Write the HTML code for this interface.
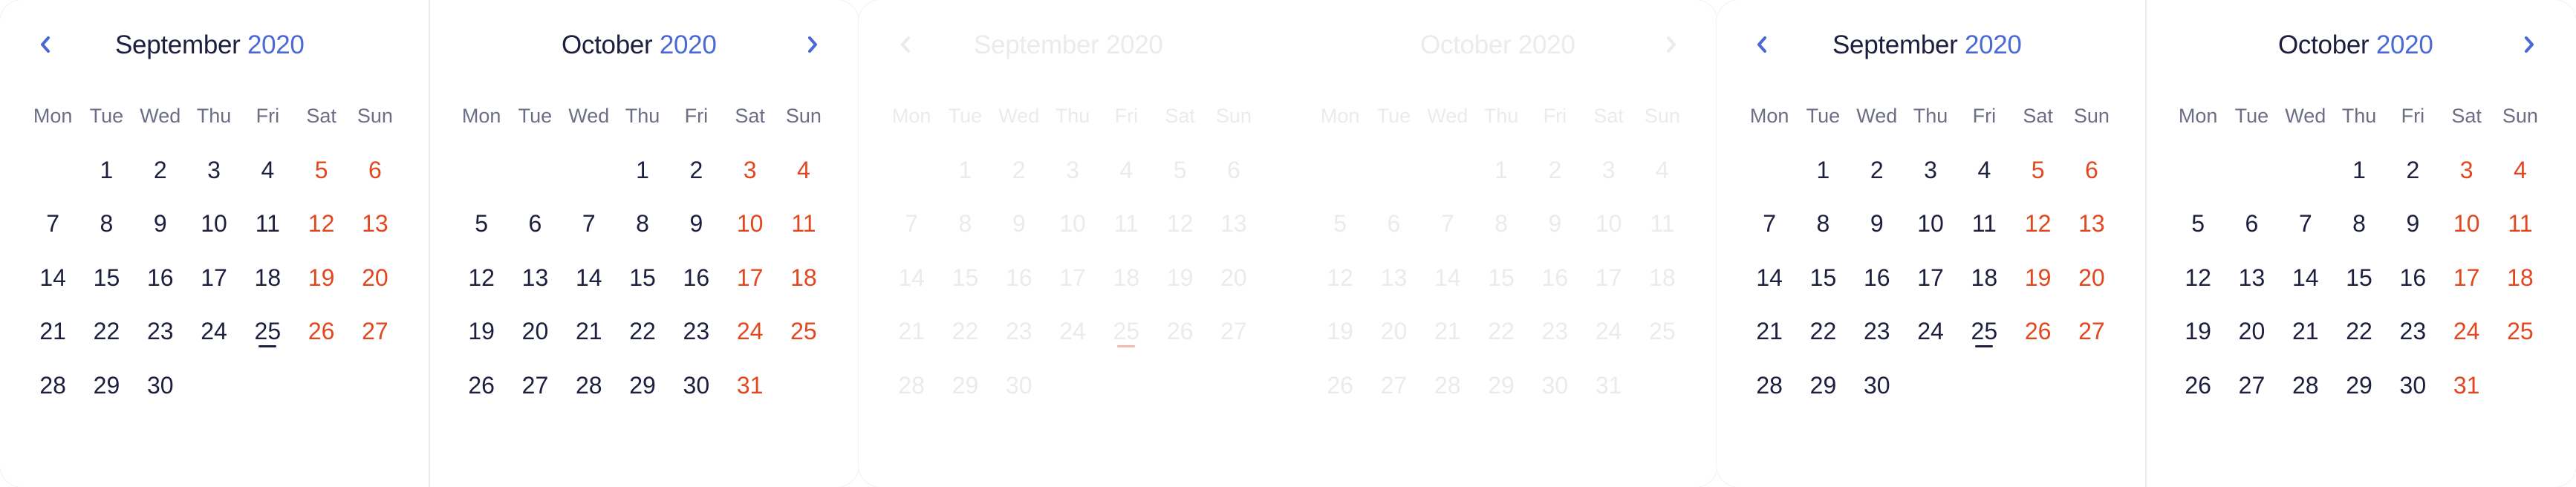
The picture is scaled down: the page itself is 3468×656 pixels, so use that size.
<!DOCTYPE html>
<html><head><meta charset="utf-8"><style>
*{margin:0;padding:0;box-sizing:border-box}
body{width:3468px;height:656px;background:#fff;position:relative;overflow:hidden;font-family:"Liberation Sans",sans-serif}
.card{position:absolute;top:0;width:1156px;height:656px;border-radius:30px;background:#fff;box-shadow:0 0 0 1px #f2f2f5}
.div{position:absolute;left:577px;top:0;width:2px;height:656px;background:#ececf0}
.m{position:absolute;top:0;width:578px;height:656px}
.h{position:absolute;top:41px;height:40px;line-height:40px;font-size:35px;color:#1d1f3f;white-space:nowrap;letter-spacing:-0.3px}
.h b{font-weight:normal;color:#4a69d6}
.g{position:absolute;left:35px;top:120px;display:grid;grid-template-columns:repeat(7,72.3px);grid-auto-rows:72.5px}
.g div{text-align:center;line-height:72.5px;font-size:32px;color:#1d1f3f;position:relative}
.g .d{font-size:27px;color:#6b6e86}
.g .r{color:#e2471f}
.g .u::after{content:"";position:absolute;left:24px;width:24px;top:55px;height:3px;border-radius:2px;background:#1d1f3f}
.ch{position:absolute;top:48px}
.fade .h,.fade .h b,.fade .g div,.fade .g .d,.fade .g .r{color:#ebebef}
.fade .g .u::after{background:#f4b8b0}
</style></head><body>

<!-- CARD 1 -->
<div class="card" style="left:0">
 <div class="div"></div>
 <svg class="ch" style="left:50px" width="22" height="24" viewBox="0 0 22 24"><polyline points="15,3 7,12 15,21" fill="none" stroke="#4a69d6" stroke-width="4" stroke-linecap="round" stroke-linejoin="round"/></svg>
 <svg class="ch" style="left:1083px" width="22" height="24" viewBox="0 0 22 24"><polyline points="7,3 15,12 7,21" fill="none" stroke="#4a69d6" stroke-width="4" stroke-linecap="round" stroke-linejoin="round"/></svg>
 <div class="m" style="left:0">
  <div class="h" style="left:155px">September <b>2020</b></div>
  <div class="g">
   <div class="d">Mon</div><div class="d">Tue</div><div class="d">Wed</div><div class="d">Thu</div><div class="d">Fri</div><div class="d">Sat</div><div class="d">Sun</div>
   <div></div><div>1</div><div>2</div><div>3</div><div>4</div><div class="r">5</div><div class="r">6</div>
   <div>7</div><div>8</div><div>9</div><div>10</div><div>11</div><div class="r">12</div><div class="r">13</div>
   <div>14</div><div>15</div><div>16</div><div>17</div><div>18</div><div class="r">19</div><div class="r">20</div>
   <div>21</div><div>22</div><div>23</div><div>24</div><div class="u">25</div><div class="r">26</div><div class="r">27</div>
   <div>28</div><div>29</div><div>30</div>
  </div>
 </div>
 <div class="m" style="left:577px">
  <div class="h" style="left:179px">October <b>2020</b></div>
  <div class="g">
   <div class="d">Mon</div><div class="d">Tue</div><div class="d">Wed</div><div class="d">Thu</div><div class="d">Fri</div><div class="d">Sat</div><div class="d">Sun</div>
   <div></div><div></div><div></div><div>1</div><div>2</div><div class="r">3</div><div class="r">4</div>
   <div>5</div><div>6</div><div>7</div><div>8</div><div>9</div><div class="r">10</div><div class="r">11</div>
   <div>12</div><div>13</div><div>14</div><div>15</div><div>16</div><div class="r">17</div><div class="r">18</div>
   <div>19</div><div>20</div><div>21</div><div>22</div><div>23</div><div class="r">24</div><div class="r">25</div>
   <div>26</div><div>27</div><div>28</div><div>29</div><div>30</div><div class="r">31</div>
  </div>
 </div>
</div>

<!-- CARD 2 (faded) -->
<div class="card fade" style="left:1156px">
 <svg class="ch" style="left:52px" width="22" height="24" viewBox="0 0 22 24"><polyline points="15,3 7,12 15,21" fill="none" stroke="#ebebef" stroke-width="4" stroke-linecap="round" stroke-linejoin="round"/></svg>
 <svg class="ch" style="left:1083px" width="22" height="24" viewBox="0 0 22 24"><polyline points="7,3 15,12 7,21" fill="none" stroke="#ebebef" stroke-width="4" stroke-linecap="round" stroke-linejoin="round"/></svg>
 <div class="m" style="left:0">
  <div class="h" style="left:155px">September <b>2020</b></div>
  <div class="g">
   <div class="d">Mon</div><div class="d">Tue</div><div class="d">Wed</div><div class="d">Thu</div><div class="d">Fri</div><div class="d">Sat</div><div class="d">Sun</div>
   <div></div><div>1</div><div>2</div><div>3</div><div>4</div><div class="r">5</div><div class="r">6</div>
   <div>7</div><div>8</div><div>9</div><div>10</div><div>11</div><div class="r">12</div><div class="r">13</div>
   <div>14</div><div>15</div><div>16</div><div>17</div><div>18</div><div class="r">19</div><div class="r">20</div>
   <div>21</div><div>22</div><div>23</div><div>24</div><div class="u">25</div><div class="r">26</div><div class="r">27</div>
   <div>28</div><div>29</div><div>30</div>
  </div>
 </div>
 <div class="m" style="left:577px">
  <div class="h" style="left:179px">October <b>2020</b></div>
  <div class="g">
   <div class="d">Mon</div><div class="d">Tue</div><div class="d">Wed</div><div class="d">Thu</div><div class="d">Fri</div><div class="d">Sat</div><div class="d">Sun</div>
   <div></div><div></div><div></div><div>1</div><div>2</div><div class="r">3</div><div class="r">4</div>
   <div>5</div><div>6</div><div>7</div><div>8</div><div>9</div><div class="r">10</div><div class="r">11</div>
   <div>12</div><div>13</div><div>14</div><div>15</div><div>16</div><div class="r">17</div><div class="r">18</div>
   <div>19</div><div>20</div><div>21</div><div>22</div><div>23</div><div class="r">24</div><div class="r">25</div>
   <div>26</div><div>27</div><div>28</div><div>29</div><div>30</div><div class="r">31</div>
  </div>
 </div>
</div>

<!-- CARD 3 -->
<div class="card" style="left:2311px;width:1157px">
 <div class="div"></div>
 <svg class="ch" style="left:50px" width="22" height="24" viewBox="0 0 22 24"><polyline points="15,3 7,12 15,21" fill="none" stroke="#4a69d6" stroke-width="4" stroke-linecap="round" stroke-linejoin="round"/></svg>
 <svg class="ch" style="left:1083px" width="22" height="24" viewBox="0 0 22 24"><polyline points="7,3 15,12 7,21" fill="none" stroke="#4a69d6" stroke-width="4" stroke-linecap="round" stroke-linejoin="round"/></svg>
 <div class="m" style="left:0">
  <div class="h" style="left:156px">September <b>2020</b></div>
  <div class="g">
   <div class="d">Mon</div><div class="d">Tue</div><div class="d">Wed</div><div class="d">Thu</div><div class="d">Fri</div><div class="d">Sat</div><div class="d">Sun</div>
   <div></div><div>1</div><div>2</div><div>3</div><div>4</div><div class="r">5</div><div class="r">6</div>
   <div>7</div><div>8</div><div>9</div><div>10</div><div>11</div><div class="r">12</div><div class="r">13</div>
   <div>14</div><div>15</div><div>16</div><div>17</div><div>18</div><div class="r">19</div><div class="r">20</div>
   <div>21</div><div>22</div><div>23</div><div>24</div><div class="u">25</div><div class="r">26</div><div class="r">27</div>
   <div>28</div><div>29</div><div>30</div>
  </div>
 </div>
 <div class="m" style="left:577px">
  <div class="h" style="left:179px">October <b>2020</b></div>
  <div class="g">
   <div class="d">Mon</div><div class="d">Tue</div><div class="d">Wed</div><div class="d">Thu</div><div class="d">Fri</div><div class="d">Sat</div><div class="d">Sun</div>
   <div></div><div></div><div></div><div>1</div><div>2</div><div class="r">3</div><div class="r">4</div>
   <div>5</div><div>6</div><div>7</div><div>8</div><div>9</div><div class="r">10</div><div class="r">11</div>
   <div>12</div><div>13</div><div>14</div><div>15</div><div>16</div><div class="r">17</div><div class="r">18</div>
   <div>19</div><div>20</div><div>21</div><div>22</div><div>23</div><div class="r">24</div><div class="r">25</div>
   <div>26</div><div>27</div><div>28</div><div>29</div><div>30</div><div class="r">31</div>
  </div>
 </div>
</div>
</body></html>
